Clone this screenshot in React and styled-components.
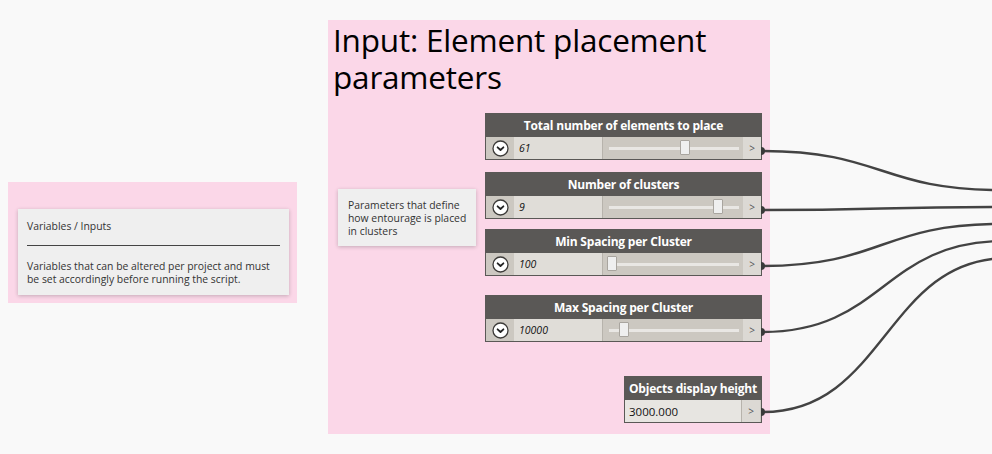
import React from 'react';
import styled, { createGlobalStyle } from 'styled-components';

const GlobalStyle = createGlobalStyle`
    body {
        margin: 0;
        background: #f9f9f9;
        overflow: hidden;
        font-family: "Open Sans", "Noto Sans", sans-serif;
    }
`;

const Canvas = styled.div`
    position: relative;
    width: 992px;
    height: 454px;
    overflow: hidden;
    background: #f9f9f9;
`;

// groups sit on the free canvas, so their place is the content itself
const Group = styled.div`
    position: absolute;
    left: ${({ x }) => x}px;
    top: ${({ y }) => y}px;
    width: ${({ w }) => w}px;
    height: ${({ h }) => h}px;
    box-sizing: border-box;
    padding: ${({ pad }) => pad || '0'};
    background: #fbd7e8;
`;

const GroupTitle = styled.h1`
    margin: 0;
    padding: 1px 0 0 5px;
    font-weight: 400;
    font-size: 31.5px;
    line-height: 37px;
    color: #000;
    letter-spacing: -0.2px;
`;

const NoteBox = styled.div`
    width: ${({ w }) => w}px;
    height: ${({ h }) => h}px;
    box-sizing: border-box;
    padding: ${({ pad }) => pad || '10px 9px'};
    background: #efefef;
    box-shadow: 0 1px 4px rgba(0, 0, 0, 0.22);
    font-size: 10.4px;
    line-height: 13px;
    color: #333;

    p {
        margin: 0;
    }
`;

const FloatingNote = styled(NoteBox)`
    position: absolute;
    left: ${({ x }) => x}px;
    top: ${({ y }) => y}px;
`;

const Rule = styled.div`
    margin: 2px 0 14px;
    height: 10px;
    border-bottom: 1px solid #444;
    width: 253px;
`;

const Node = styled.div`
    position: absolute;
    left: ${({ x }) => x}px;
    top: ${({ y }) => y}px;
    width: ${({ w }) => w}px;
    box-sizing: border-box;
    border: 1px solid #5a5856;
    background: #5a5856;
`;

const Header = styled.div`
    height: 23px;
    display: flex;
    align-items: center;
    justify-content: center;
    color: #fff;
    font-weight: 700;
    font-size: 12px;
    letter-spacing: -0.2px;
    white-space: nowrap;
`;

const Row = styled.div`
    display: flex;
    height: 22px;
    background: #ccc8c1;
`;

const CollapseCell = styled.div`
    width: 28px;
    display: flex;
    align-items: center;
    justify-content: center;
`;

const ValueCell = styled.div`
    width: ${({ w }) => w}px;
    box-sizing: border-box;
    background: ${({ plain }) => (plain ? '#e7e5e1' : '#e0ddd8')};
    border-right: 1px solid #b7b3ac;
    display: flex;
    align-items: center;
    padding-left: ${({ plain }) => (plain ? 4 : 5)}px;
    font-size: ${({ plain }) => (plain ? 11.5 : 10.5)}px;
    font-style: ${({ plain }) => (plain ? 'normal' : 'italic')};
    color: #111;
`;

const SliderCell = styled.div`
    position: relative;
    flex: 1;
`;

const Track = styled.div`
    position: absolute;
    left: 6px;
    right: 4px;
    top: 10px;
    height: 3px;
    background: #e9e7e4;
`;

const Thumb = styled.div`
    position: absolute;
    top: 3px;
    width: 10px;
    height: 15px;
    margin-left: -5px;
    box-sizing: border-box;
    background: #efefef;
    border: 1px solid #a9a59f;
    border-radius: 1px;
`;

const PortCell = styled.div`
    width: 18px;
    background: #dcd9d4;
    display: flex;
    align-items: center;
    justify-content: center;
    font-size: 10px;
    color: #555;
`;

const Wires = styled.svg`
    position: absolute;
    left: 0;
    top: 0;
    pointer-events: none;
`;

const CollapseIcon = () => (
    <svg width="17" height="17" viewBox="0 0 17 17">
        <circle cx="8.5" cy="8.5" r="7.5" fill="#fff" stroke="#3d3b39" strokeWidth="1.3" />
        <path d="M5.6 7.3 L8.5 10 L11.4 7.3" fill="none" stroke="#222" strokeWidth="1.8" strokeLinecap="round" strokeLinejoin="round" />
    </svg>
);

const sliders = [
    { title: 'Total number of elements to place', value: '61', y: 113, pos: 0.59 },
    { title: 'Number of clusters', value: '9', y: 172, pos: 0.855 },
    { title: 'Min Spacing per Cluster', value: '100', y: 229, pos: 0.0 },
    { title: 'Max Spacing per Cluster', value: '10000', y: 295, pos: 0.1 },
];

const wires = [
    { y0: 151, tx: 1000, ty: 190 },
    { y0: 210, tx: 1000, ty: 207 },
    { y0: 266, tx: 1000, ty: 224 },
    { y0: 332, tx: 1004, ty: 241 },
    { y0: 412, tx: 1008, ty: 258 },
];

const wirePath = ({ y0, tx, ty }) => {
    const x0 = 763;
    const d = (tx - x0) * 0.5;
    return `M${x0} ${y0} C${x0 + d} ${y0} ${tx - d} ${ty} ${tx} ${ty}`;
};

const App = () => {
    return (
        <Canvas>
            <GlobalStyle />

            <Group x={8} y={182} w={289} h={121} pad="27px 0 0 10px">
                <NoteBox w={271} h={86} pad="11px 9px">
                    <p>Variables / Inputs</p>
                    <Rule />
                    <p>Variables that can be altered per project and must be set accordingly before running the script.</p>
                </NoteBox>
            </Group>

            <Group x={328} y={20} w={442} h={414}>
                <GroupTitle>Input: Element placement parameters</GroupTitle>
            </Group>
            <FloatingNote x={338} y={189} w={138} h={57} pad="10px 8px 10px 10px">
                <p>Parameters that define how entourage is placed in clusters</p>
            </FloatingNote>

            {sliders.map((s) => (
                <Node key={s.title} x={485} y={s.y} w={277}>
                    <Header>{s.title}</Header>
                    <Row>
                        <CollapseCell>
                            <CollapseIcon />
                        </CollapseCell>
                        <ValueCell w={89}>{s.value}</ValueCell>
                        <SliderCell>
                            <Track />
                            <Thumb style={{ left: `calc(9px + ${s.pos} * (100% - 16px))` }} />
                        </SliderCell>
                        <PortCell>&gt;</PortCell>
                    </Row>
                </Node>
            ))}

            <Node x={624} y={376} w={138}>
                <Header>Objects display height</Header>
                <Row>
                    <ValueCell w={117} plain>3000.000</ValueCell>
                    <PortCell>&gt;</PortCell>
                </Row>
            </Node>

            <Wires width="992" height="454">
                {wires.map((w) => (
                    <g key={w.y0}>
                        <path d={wirePath(w)} fill="none" stroke="#434343" strokeWidth="2.4" />
                        <path d={`M761 ${w.y0 - 4} A4 4 0 0 1 761 ${w.y0 + 4} Z`} fill="#3a3a3a" />
                    </g>
                ))}
            </Wires>
        </Canvas>
    );
};

export default App;
